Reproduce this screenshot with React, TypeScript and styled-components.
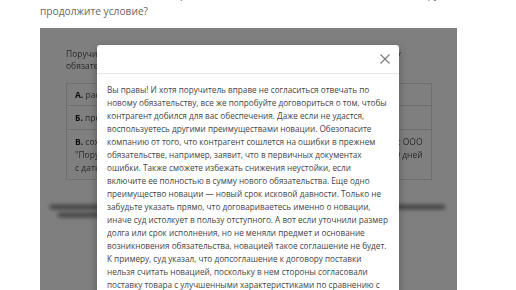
import styled, { createGlobalStyle } from 'styled-components'

const GlobalStyle = createGlobalStyle`
  html, body {
    margin: 0;
    padding: 0;
    background: #ffffff;
    font-family: 'Open Sans', 'Liberation Sans', sans-serif;
    overflow: hidden;
  }
`

const Page = styled('div')`
  width: 516px;
  height: 290px;
  overflow: hidden;
  background: #ffffff;
`

const Question = styled('p')`
  margin: -14px 0 8px;
  padding: 0 40px;
  font-size: 10.2px;
  line-height: 17px;
  color: #666666;
  white-space: nowrap;
  overflow: hidden;
`

const Card = styled('div')`
  position: relative;
  margin-left: 40px;
  width: 417px;
  height: 262px;
  overflow: hidden;
  background: #ffffff;
`

const CardBody = styled('div')`
  padding: 20px 25px 0 26px;
  filter: blur(0.4px);
`

const Intro = styled('p')`
  margin: 0;
  font-size: 8.5px;
  line-height: 12px;
  color: #555555;
`

const Options = styled('div')`
  margin-top: 11px;
  border: 1px solid #dedede;
`

const Option = styled('div')<{ $pad: number }>`
  padding: ${(p) => p.$pad}px 8px;
  font-size: 8.5px;
  line-height: 13px;
  color: #555555;
  white-space: nowrap;
  overflow: hidden;

  & + & {
    border-top: 1px solid #dedede;
  }

  b {
    color: #222222;
  }
`

const Footer = styled('div')`
  margin: 25px -12px 0 -16px;
  display: flex;
  flex-direction: column;
  gap: 4px;
  filter: blur(2px);
`

const ShadowBar = styled('div')<{ $width: string; $left: number }>`
  width: ${(p) => p.$width};
  margin-left: ${(p) => p.$left}px;
  height: 4px;
  background: #6e6e6e;
`

const Overlay = styled('div')`
  position: absolute;
  inset: 0;
  background: rgba(0, 0, 0, 0.5);
`

const Modal = styled('div')`
  position: absolute;
  left: 57px;
  top: 17px;
  width: 302px;
  height: 300px;
  background: #ffffff;
  border-radius: 3px;
  box-shadow: 0 3px 9px rgba(0, 0, 0, 0.3);
`

const ModalHeader = styled('div')`
  height: 28px;
  display: flex;
  align-items: center;
  justify-content: flex-end;
  padding-right: 8px;
  border-bottom: 1px solid #e5e5e5;
`

const CloseButton = styled('button')`
  width: 12px;
  height: 12px;
  padding: 0;
  border: 0;
  background: none;
  display: flex;
  align-items: center;
  justify-content: center;
  cursor: pointer;
`

const ModalBody = styled('div')`
  padding: 9px 10px;
`

const Answer = styled('p')`
  margin: 0;
  font-size: 8.2px;
  line-height: 13px;
  color: #454545;
`

const App: React.FC = () => {
  return (
    <Page>
      <GlobalStyle />
      <Question>
        Компания заключила с контрагентом соглашение о новации долга по договору. Как вы
        <br />
        продолжите условие?
      </Question>
      <Card>
        <CardBody>
          <Intro>
            Поручитель по первоначальному договору не дал согласия отвечать по новому
            <br />
            обязательству. Что вы сделаете?
          </Intro>
          <Options>
            <Option $pad={4}>
              <b>А.</b> расторгнуть договор поручительства
            </Option>
            <Option $pad={5}>
              <b>Б.</b> прекратить поручительство и потребовать новое обеспечение
            </Option>
            <Option $pad={5}>
              <b>В.</b> сохранить все поручительство, указывая в соглашении о новации условие: ООО
              <br />
              "Поручитель" тоже обязуется отвечать по новому обязательству в течение 30 дней
              <br />с даты подписания соглашения
            </Option>
          </Options>
          <Footer>
            <ShadowBar $width="395px" $left={0} />
            <ShadowBar $width="120px" $left={8} />
          </Footer>
        </CardBody>
        <Overlay />
        <Modal>
          <ModalHeader>
            <CloseButton aria-label="Закрыть">
              <svg width="10" height="10" viewBox="0 0 10 10">
                <path d="M0.5 0.5 L9.5 9.5 M9.5 0.5 L0.5 9.5" stroke="#7a7a7a" strokeWidth="1.1" />
              </svg>
            </CloseButton>
          </ModalHeader>
          <ModalBody>
            <Answer>
              Вы правы! И хотя поручитель вправе не согласиться отвечать по новому
              обязательству, все же попробуйте договориться о том, чтобы контрагент добился
              для вас обеспечения. Даже если не удастся, воспользуетесь другими
              преимуществами новации. Обезопасите компанию от того, что контрагент сошлется
              на ошибки в прежнем обязательстве, например, заявит, что в первичных
              документах ошибки. Также сможете избежать снижения неустойки, если включите ее
              полностью в сумму нового обязательства. Еще одно преимущество новации — новый
              срок исковой давности. Только не забудьте указать прямо, что договариваетесь
              именно о новации, иначе суд истолкует в пользу отступного. А вот если уточнили
              размер долга или срок исполнения, но не меняли предмет и основание
              возникновения обязательства, новацией такое соглашение не будет. К примеру,
              суд указал, что допсоглашение к договору поставки нельзя считать новацией,
              поскольку в нем стороны согласовали поставку товара с улучшенными
              характеристиками по сравнению с первоначальными условиями.
            </Answer>
          </ModalBody>
        </Modal>
      </Card>
    </Page>
  )
}

export default App
